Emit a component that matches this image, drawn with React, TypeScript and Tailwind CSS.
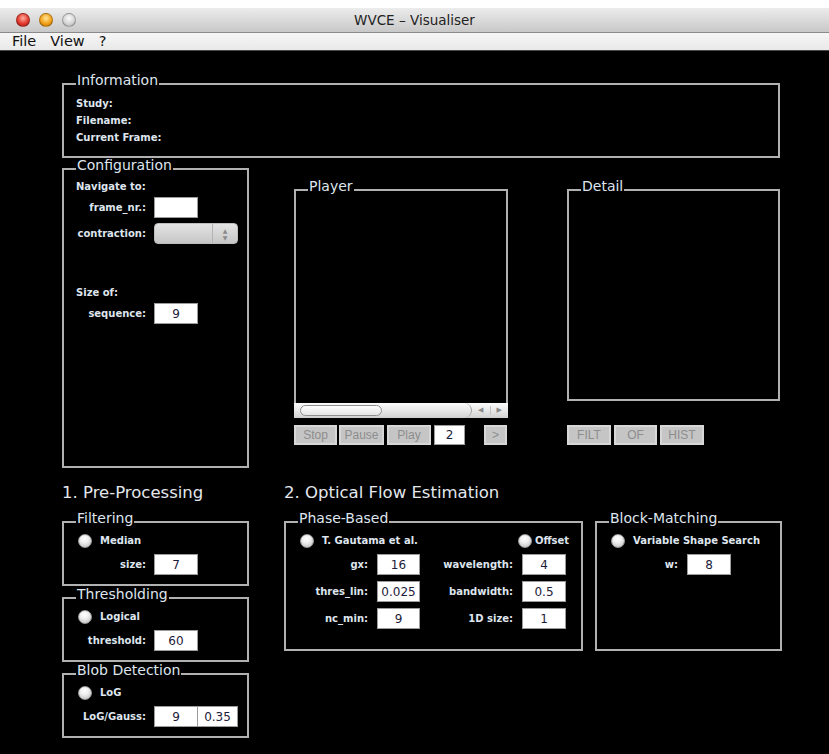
import React from 'react';

type BoxProps = {
  title: string;
  className?: string;
  children?: React.ReactNode;
};

// Titled border panel, Swing-style
const GroupBox: React.FC<BoxProps> = ({ title, className = '', children }) => (
  <fieldset className={`min-w-0 border-2 border-[#b1b1b1] px-[12px] ${className}`}>
    <legend className="px-[1px] pb-[7px] text-[14px] leading-[16px] text-[#dfe5ee]">{title}</legend>
    {children}
  </fieldset>
);

const Field: React.FC<{ value?: string; className?: string }> = ({ value = '', className = 'w-[44px]' }) => (
  <input
    readOnly
    value={value}
    className={`shrink-0 h-[21px] bg-white border border-[#9c9c9c] text-center text-[12px] font-normal text-[#1c1c3a] outline-none ${className}`}
  />
);

const Radio: React.FC<{ label: string; gap?: string }> = ({ label, gap = 'ml-[8px]' }) => (
  <span className="flex items-center">
    <span className="ml-[2px] w-[14px] h-[14px] rounded-full border border-[#9a9a9a] bg-[radial-gradient(circle_at_45%_30%,#ffffff_0%,#f2f2f2_35%,#b8b8b8_100%)]" />
    <span className={`${gap} text-[10px] font-bold text-[#dfe5ee]`}>{label}</span>
  </span>
);

const LabelRow: React.FC<{ label: string; labelWidth?: string; children: React.ReactNode; className?: string }> = ({
  label,
  labelWidth = 'w-[70px]',
  children,
  className = '',
}) => (
  <div className={`flex items-center ${className}`}>
    <span className={`${labelWidth} shrink-0 whitespace-nowrap text-right text-[10px] font-bold text-[#dfe5ee]`}>{label}</span>
    <div className="ml-[8px] shrink-0 flex">{children}</div>
  </div>
);

const GreyButton: React.FC<{ label: string; className?: string }> = ({ label, className = '' }) => (
  <button className={`h-[20px] bg-[#c5c5c5] border-2 border-[#d7d7d7] text-[12px] leading-none text-[#8d8d8d] font-['Liberation_Sans',sans-serif] ${className}`}>
    {label}
  </button>
);

const Light: React.FC<{ tone: string }> = ({ tone }) => (
  <span className={`w-[14px] h-[14px] rounded-full border border-black/25 ${tone}`} />
);

export default function App() {
  return (
    <div className="w-[829px] h-[754px] flex flex-col bg-black overflow-hidden font-['DejaVu_Sans',sans-serif]">
      {/* window chrome */}
      <div className="h-[8px] bg-white" />
      <div className="h-[25px] relative flex items-center border-b border-[#8a8a8a] bg-linear-to-b from-[#ececec] to-[#c8c8c8]">
        <div className="flex items-center gap-[9px] pl-[16px]">
          <Light tone="bg-[radial-gradient(circle_at_50%_35%,#ffb0a4_0%,#e23a2e_55%,#9c1a12_100%)]" />
          <Light tone="bg-[radial-gradient(circle_at_50%_35%,#ffe59a_0%,#f3a21a_55%,#b46a04_100%)]" />
          <Light tone="bg-[radial-gradient(circle_at_50%_35%,#fafafa_0%,#d6d6d6_55%,#a8a8a8_100%)]" />
        </div>
        <span className="absolute left-0 right-0 text-center text-[13.5px] text-[#222]">WVCE – Visualiser</span>
      </div>
      <div className="h-[18px] flex items-center gap-[14px] pl-[12px] border-b border-[#4a4a4a] bg-linear-to-b from-[#f6f6f6] to-[#e9e9e9] text-[14.5px] leading-none text-[#111]">
        <span>File</span>
        <span>View</span>
        <span>?</span>
      </div>

      <main className="flex-1 pl-[62px] pt-[21px] text-[#dfe5ee]">
        {/* Information */}
        <GroupBox title="Information" className="w-[718px] h-[86px]">
          <div className="text-[10px] font-bold leading-[17px]">
            <div>Study:</div>
            <div>Filename:</div>
            <div>Current Frame:</div>
          </div>
        </GroupBox>

        <div className="flex -mt-px">
          <GroupBox title="Configuration" className="w-[187px] h-[311px]">
            <div className="text-[10px] font-bold leading-[14px]">Navigate to:</div>
            <LabelRow label="frame_nr.:" className="mt-[3px]">
              <Field />
            </LabelRow>
            <LabelRow label="contraction:" className="mt-[5px]">
              <div className="w-[84px] h-[21px] flex rounded-[4px] border border-[#bdbdbd] bg-linear-to-b from-[#e4e4e4] to-[#c6c6c6]">
                <div className="flex-1" />
                <div className="w-[25px] flex flex-col items-center justify-center border-l border-[#b4b4b4] text-[6px] leading-[7px] text-[#8a8a8a]">
                  <span>▲</span>
                  <span>▼</span>
                </div>
              </div>
            </LabelRow>
            <div className="mt-[42px] text-[10px] font-bold leading-[14px]">Size of:</div>
            <LabelRow label="sequence:" className="mt-[3px]">
              <Field value="9" />
            </LabelRow>
          </GroupBox>

          {/* Player */}
          <div className="ml-[45px] mt-[21px] w-[214px] flex flex-col">
            <GroupBox title="Player" className="h-[225px] border-b-0" />
            <div className="h-[15px] flex bg-linear-to-b from-[#fbfbfb] via-[#e8e8e8] to-[#d0d0d0]">
              <div className="flex-1 flex items-center pl-[6px] rounded-r-[8px] border-r border-[#a0a0a0]">
                <div className="w-[82px] h-[11px] rounded-full border border-[#8e8e8e] bg-linear-to-b from-white to-[#e4e4e4]" />
              </div>
              <div className="w-[36px] flex items-center">
                <span className="flex-1 text-center text-[7px] text-[#8a8a8a]">◀</span>
                <span className="h-[9px] border-l border-[#c2c2c2]" />
                <span className="flex-1 text-center text-[7px] text-[#8a8a8a]">▶</span>
              </div>
            </div>
            <div className="mt-[7px] flex">
              <GreyButton label="Stop" className="w-[43px]" />
              <GreyButton label="Pause" className="ml-[2px] w-[45px]" />
              <GreyButton label="Play" className="ml-[3px] w-[44px]" />
              <Field value="2" className="ml-[3px] w-[31px] !h-[20px]" />
              <GreyButton label=">" className="ml-[19px] w-[23px]" />
            </div>
          </div>

          {/* Detail */}
          <div className="ml-[59px] mt-[21px] w-[213px] flex flex-col">
            <GroupBox title="Detail" className="h-[223px]" />
            <div className="mt-[24px] flex">
              <GreyButton label="FILT" className="w-[44px]" />
              <GreyButton label="OF" className="ml-[3px] w-[43px]" />
              <GreyButton label="HIST" className="ml-[3px] w-[44px]" />
            </div>
          </div>
        </div>

        <div className="flex">
          {/* 1. Pre-Processing */}
          <div className="w-[187px] flex flex-col">
            <h2 className="mt-[16px] text-[16.5px] leading-[18px] text-[#e4e8ee]">1. Pre-Processing</h2>
            <GroupBox title="Filtering" className="mt-[8px] h-[76px]">
              <div className="h-[15px] flex items-center">
                <Radio label="Median" />
              </div>
              <LabelRow label="size:" className="mt-[6px]">
                <Field value="7" />
              </LabelRow>
            </GroupBox>
            <GroupBox title="Thresholding" className="h-[76px]">
              <div className="h-[15px] flex items-center">
                <Radio label="Logical" />
              </div>
              <LabelRow label="threshold:" className="mt-[6px]">
                <Field value="60" />
              </LabelRow>
            </GroupBox>
            <GroupBox title="Blob Detection" className="h-[76px]">
              <div className="h-[15px] flex items-center">
                <Radio label="LoG" />
              </div>
              <LabelRow label="LoG/Gauss:" className="mt-[6px]">
                <Field value="9" />
                <Field value="0.35" className="w-[40px] border-l-0" />
              </LabelRow>
            </GroupBox>
          </div>

          {/* 2. Optical Flow Estimation */}
          <div className="ml-[35px] flex flex-col">
            <h2 className="mt-[16px] text-[16.5px] leading-[18px] text-[#e4e8ee]">2. Optical Flow Estimation</h2>
            <div className="mt-[8px] flex">
              <GroupBox title="Phase-Based" className="w-[299px] h-[141px]">
                <div className="h-[15px] flex items-center justify-between">
                  <Radio label="T. Gautama et al." />
                  <Radio label="Offset" gap="ml-[3px]" />
                </div>
                <div className="mt-[6px] flex flex-col gap-[6px]">
                  {[
                    ['gx:', '16', 'wavelength:', '4'],
                    ['thres_lin:', '0.025', 'bandwidth:', '0.5'],
                    ['nc_min:', '9', '1D size:', '1'],
                  ].map(([l1, v1, l2, v2]) => (
                    <div key={l1} className="flex items-center text-[10px] font-bold">
                      <span className="w-[70px] text-right">{l1}</span>
                      <Field value={v1} className="ml-[9px] w-[43px]" />
                      <span className="w-[93px] text-right">{l2}</span>
                      <Field value={v2} className="ml-[9px] w-[44px]" />
                    </div>
                  ))}
                </div>
              </GroupBox>
              <GroupBox title="Block-Matching" className="ml-[12px] w-[187px] h-[141px]">
                <div className="h-[15px] flex items-center">
                  <Radio label="Variable Shape Search" />
                </div>
                <div className="mt-[6px] flex items-center text-[10px] font-bold">
                  <span className="w-[69px] text-right">w:</span>
                  <Field value="8" className="ml-[9px] w-[44px]" />
                </div>
              </GroupBox>
            </div>
          </div>
        </div>
      </main>
    </div>
  );
}
